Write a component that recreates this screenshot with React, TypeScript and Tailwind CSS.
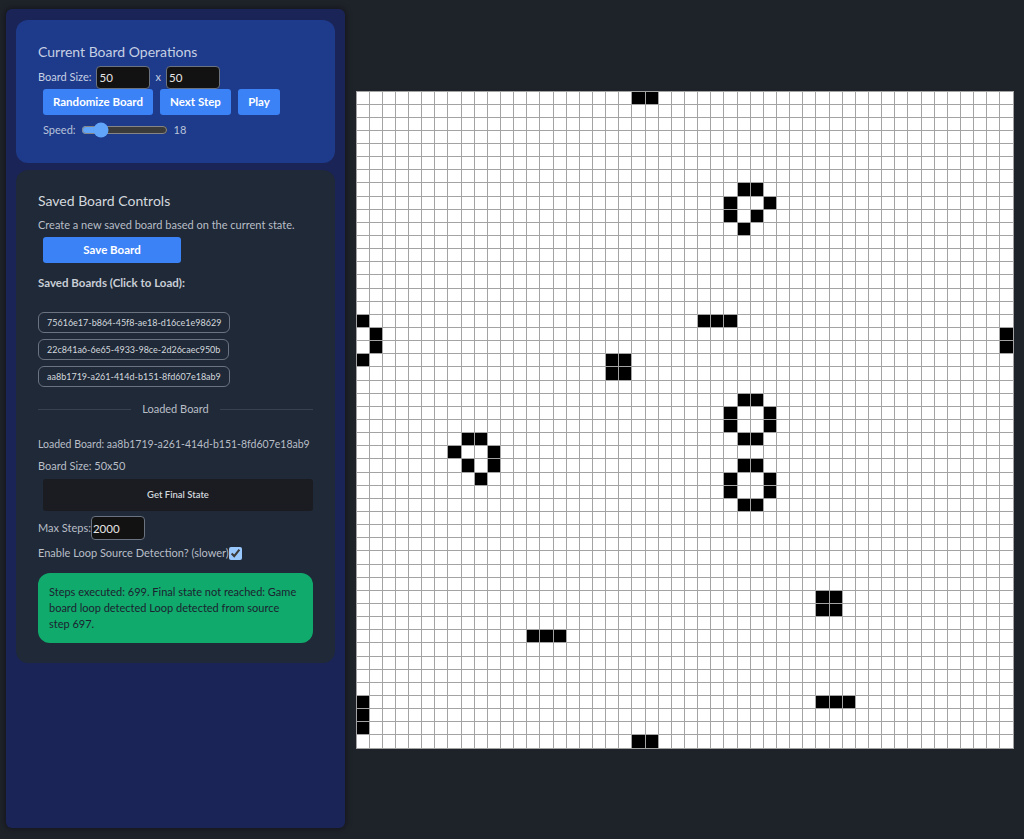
import React from "react";

const LIVE_CELLS: [number, number][] = [
  [0, 21], [0, 22], [49, 21], [49, 22],
  [7, 29], [7, 30], [8, 28], [8, 31], [9, 28], [9, 30], [10, 29],
  [17, 0], [18, 1], [19, 1], [20, 0], [18, 49], [19, 49],
  [17, 26], [17, 27], [17, 28],
  [20, 19], [20, 20], [21, 19], [21, 20],
  [23, 29], [23, 30], [24, 28], [24, 31], [25, 28], [25, 31], [26, 29], [26, 30],
  [28, 29], [28, 30], [29, 28], [29, 31], [30, 28], [30, 31], [31, 29], [31, 30],
  [26, 8], [26, 9], [27, 7], [27, 10], [28, 8], [28, 10], [29, 9],
  [38, 35], [38, 36], [39, 35], [39, 36],
  [41, 13], [41, 14], [41, 15],
  [46, 35], [46, 36], [46, 37],
  [46, 0], [47, 0], [48, 0],
];

const live = new Set(LIVE_CELLS.map(([r, c]) => `${r}-${c}`));

const savedBoards = [
  "75616e17-b864-45f8-ae18-d16ce1e98629",
  "22c841a6-6e65-4933-98ce-2d26caec950b",
  "aa8b1719-a261-414d-b151-8fd607e18ab9",
];

function Board() {
  const cells = [];
  for (let r = 0; r < 50; r++) {
    for (let c = 0; c < 50; c++) {
      const on = live.has(`${r}-${c}`);
      cells.push(
        <div
          key={`${r}-${c}`}
          className={`border-r border-b border-[#a3a3a3] ${on ? "bg-black" : "bg-white"}`}
        />
      );
    }
  }
  return (
    <div className="grid h-[658px] w-[658px] grid-cols-[repeat(50,1fr)] grid-rows-[repeat(50,1fr)] border-l border-t border-[#a3a3a3] bg-white">
      {cells}
    </div>
  );
}

export default function App() {
  return (
    <div className="flex h-[839px] w-full bg-[#1e2229] font-['Lato',sans-serif]">
      <aside className="mb-[11px] ml-[6px] mt-[9px] w-[339px] shrink-0 rounded-md bg-[#1a2456] px-[10px] pt-[11px] shadow-[0_0_6px_rgba(0,0,0,0.5)]">
        {/* current board */}
        <section className="h-[143px] rounded-xl bg-[#1e3a8a] px-[22px] pt-[22px]">
          <h2 className="h-[20px] text-[14px] leading-[20px] text-[#c6d0e4]">Current Board Operations</h2>
          <div className="mt-[4px] flex h-[23px] items-center text-[11px] text-[#c6d0e4]">
            <span>Board Size:</span>
            <input
              readOnly
              value="50"
              className="ml-[5px] h-[23px] w-[54px] rounded border border-[#6b7280] bg-[#121212] px-[2px] text-[11.5px] text-[#e5e5e5] outline-none"
            />
            <span className="mx-[5px]">x</span>
            <input
              readOnly
              value="50"
              className="h-[23px] w-[54px] rounded border border-[#6b7280] bg-[#121212] px-[2px] text-[11.5px] text-[#e5e5e5] outline-none"
            />
          </div>
          <div className="ml-[5px] flex h-[26px] gap-[7px]">
            <button className="w-[110px] rounded-[3px] bg-[#3b82f6] text-[11.5px] font-bold text-white">Randomize Board</button>
            <button className="w-[71px] rounded-[3px] bg-[#3b82f6] text-[11.5px] font-bold text-white">Next Step</button>
            <button className="w-[42px] rounded-[3px] bg-[#3b82f6] text-[11.5px] font-bold text-white">Play</button>
          </div>
          <div className="ml-[5px] mt-[6px] flex h-[18px] items-center text-[11px] text-[#b8c3da]">
            <span>Speed:</span>
            <input
              type="range"
              min={1}
              max={100}
              defaultValue={18}
              className="ml-[5px] h-[14px] w-[87px] accent-[#60a5fa] [color-scheme:dark]"
            />
            <span className="ml-[6px]">18</span>
          </div>
        </section>

        {/* saved boards */}
        <section className="mt-[7px] h-[493px] rounded-xl bg-[#1f2937] px-[22px] pt-[21px]">
          <h2 className="h-[20px] text-[14px] leading-[20px] text-[#d4d8de]">Saved Board Controls</h2>
          <p className="mt-[6px] h-[16px] text-[11px] leading-[16px] text-[#b9bec7]">
            Create a new saved board based on the current state.
          </p>
          <button className="ml-[5px] mt-[4px] h-[26px] w-[138px] rounded-[3px] bg-[#3b82f6] text-[11.5px] font-bold text-white">
            Save Board
          </button>
          <p className="mt-[12px] h-[16px] text-[11.5px] font-bold leading-[16px] text-[#c9ced6]">Saved Boards (Click to Load):</p>
          <div className="mt-[21px] flex flex-col items-start gap-[6px]">
            {savedBoards.map((id) => (
              <div
                key={id}
                className="flex h-[21px] items-center rounded-md border border-[#6b7280] px-[8px] text-[9px] text-[#d4d8de]"
              >
                {id}
              </div>
            ))}
          </div>
          <div className="mt-[14px] flex h-[16px] items-center gap-[11px]">
            <div className="h-px flex-1 bg-[#374151]" />
            <span className="text-[11px] text-[#b9bec7]">Loaded Board</span>
            <div className="h-px flex-1 bg-[#374151]" />
          </div>
          <p className="mt-[19px] h-[16px] whitespace-nowrap text-[10.5px] leading-[16px] text-[#b9bec7]">
            Loaded Board: aa8b1719-a261-414d-b151-8fd607e18ab9
          </p>
          <p className="mt-[6px] h-[16px] text-[11px] leading-[16px] text-[#b9bec7]">Board Size: 50x50</p>
          <button className="ml-[5px] mt-[5px] h-[32px] w-[270px] rounded-[3px] bg-[#1a1c21] text-[9.5px] font-semibold text-[#d4d8de]">
            Get Final State
          </button>
          <div className="mt-[5px] flex h-[24px] items-center text-[11px] text-[#b9bec7]">
            <span>Max Steps:</span>
            <input
              readOnly
              value="2000"
              className="h-[24px] w-[54px] rounded border border-[#6b7280] bg-[#121212] px-[1px] text-[11.5px] text-[#e5e5e5] outline-none"
            />
          </div>
          <div className="mt-[5px] flex h-[16px] items-center text-[11px] text-[#b9bec7]">
            <span>Enable Loop Source Detection? (slower)</span>
            <input type="checkbox" defaultChecked className="m-0 h-[13px] w-[13px] [color-scheme:dark]" />
          </div>
          <div className="mt-[12px] h-[70px] rounded-xl bg-[#10ab6c] px-[11px] pt-[11px] text-[11px] leading-[16px] text-[#1c2230]">
            Steps executed: 699. Final state not reached: Game board loop detected Loop detected from source step 697.
          </div>
        </section>
      </aside>
      <main className="flex flex-1 items-center justify-center">
        <Board />
      </main>
    </div>
  );
}
